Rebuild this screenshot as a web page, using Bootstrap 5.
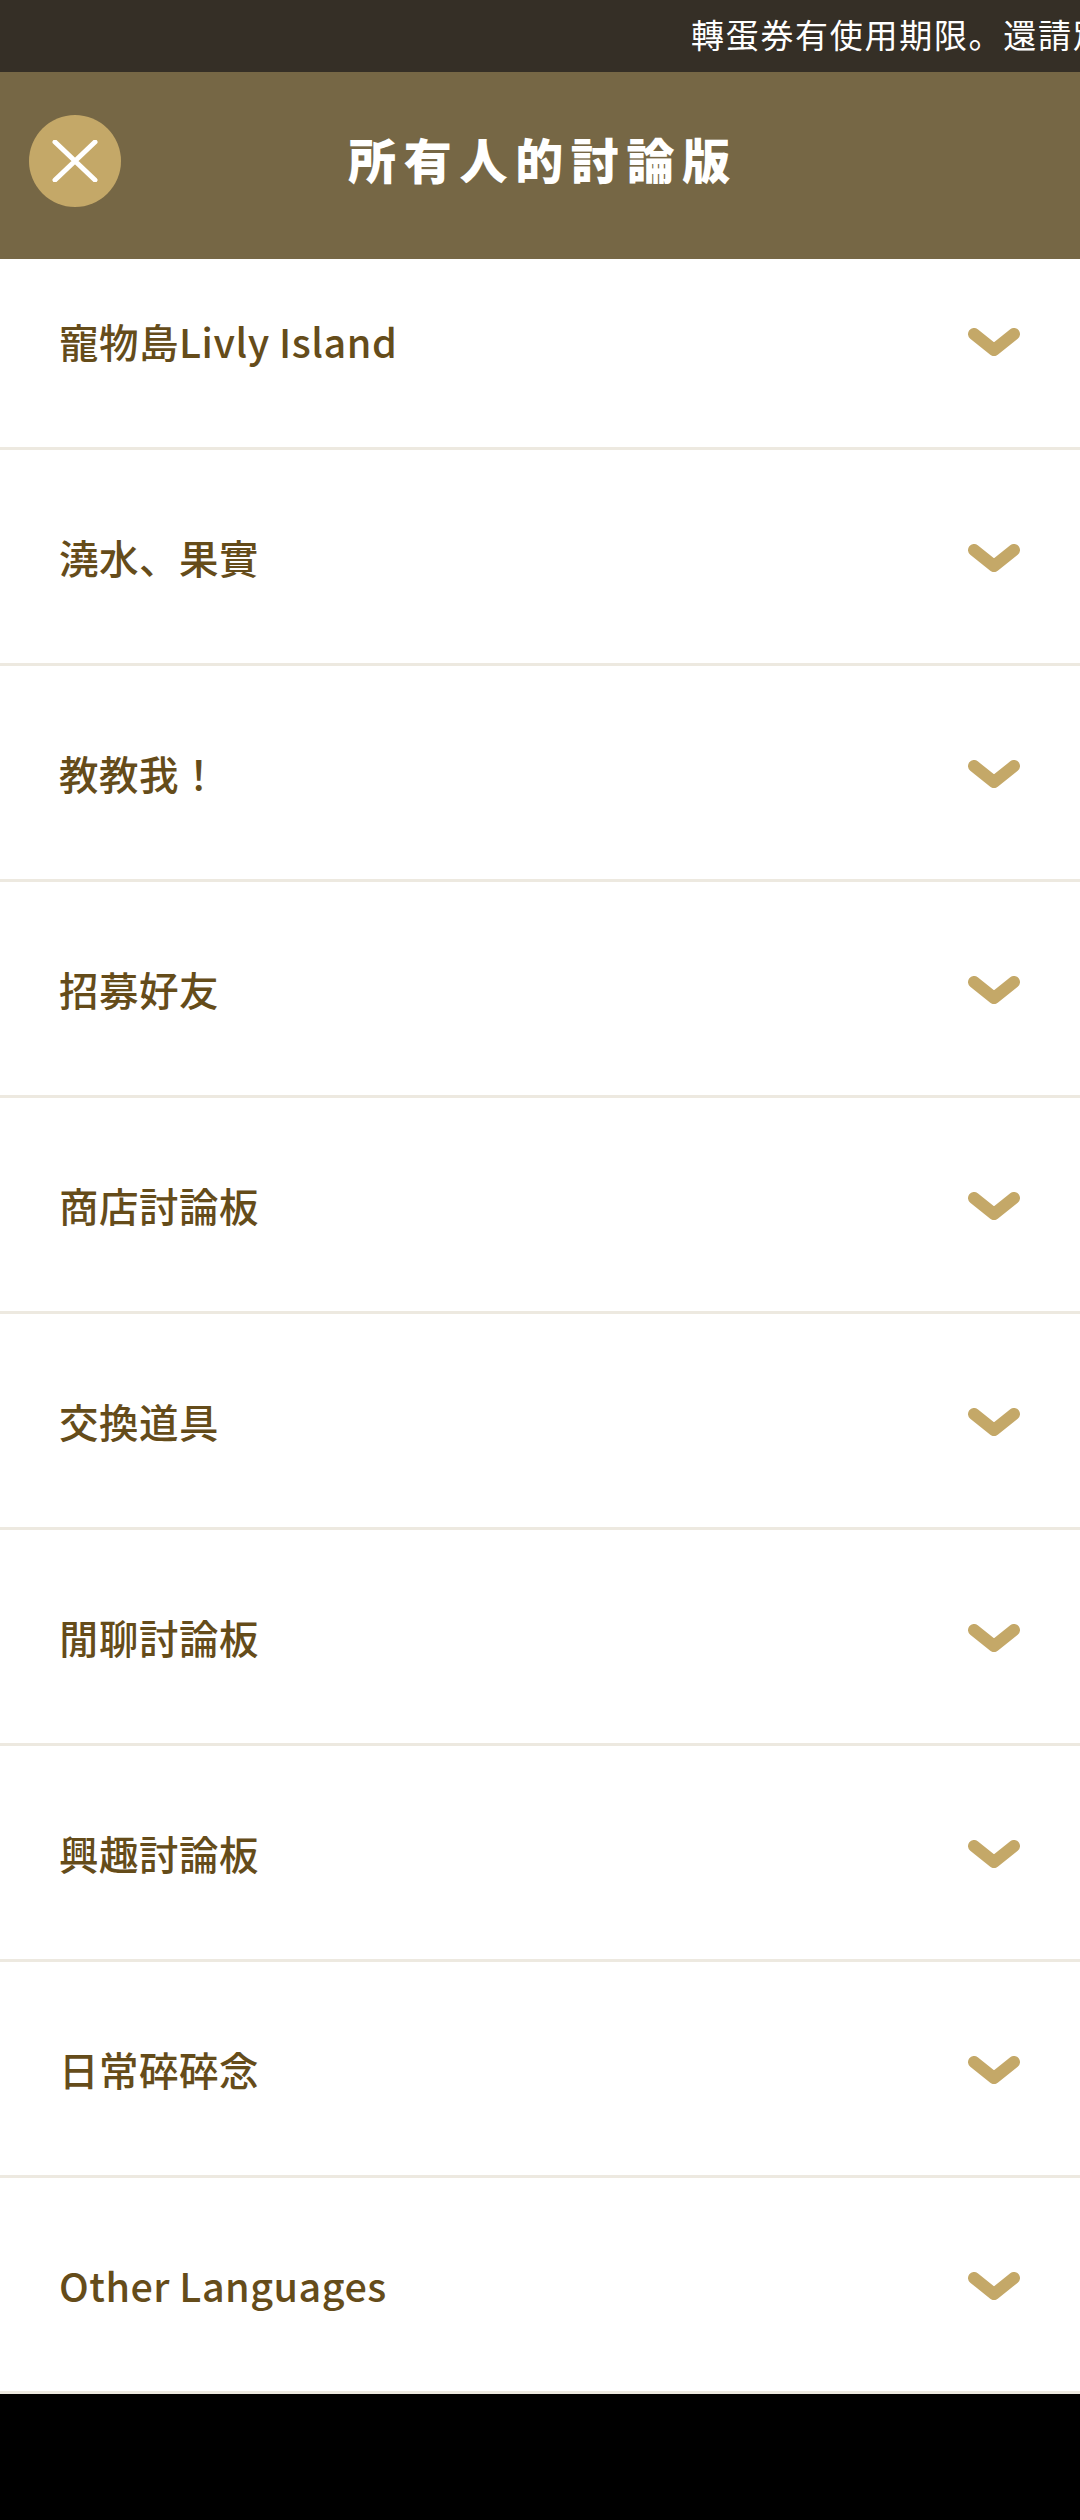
<!DOCTYPE html>
<html lang="ja">
<head>
  <meta charset="UTF-8" />
  <title>所有人的討論版</title>
  <link rel="stylesheet" href="https://cdn.jsdelivr.net/npm/bootstrap@5.3.0/dist/css/bootstrap.min.css" />
  <style>
    * {
      font-family: "Noto Sans CJK JP", "Noto Sans", sans-serif;
    }
    body {
      background-color: #000;
      margin: 0;
    }
    .ticker-bar {
      height: 72px;
      background-color: #352f26;
      color: #fff;
      font-size: 33px;
      letter-spacing: 1.7px;
      line-height: 68px;
      padding-left: 691px;
      white-space: nowrap;
      overflow: hidden;
    }
    .board-head {
      height: 187px;
      padding-bottom: 16px;
      background-color: #766745;
    }
    .board-title {
      margin: 0 0 0 6px;
      color: #fff;
      font-size: 48px;
      font-weight: 900;
      letter-spacing: 7.7px;
      line-height: 1;
    }
    .close-btn {
      left: 29px;
      top: 43px;
      width: 92px;
      height: 92px;
      background-color: #c4a868;
      border: 0;
      padding: 0;
    }
    .board-row {
      height: 216px;
      padding: 0 60px 0 59px;
      background-color: #fff;
      border-bottom: 3px solid #ede9e0;
      color: #654c1a;
      font-size: 39.5px;
      font-weight: 500;
      letter-spacing: 0.5px;
    }
    .board-row:first-child {
      height: 191px;
      padding-bottom: 25px;
    }
    .row-arrow {
      margin-top: 3px;
    }
  </style>
</head>
<body>

  <!-- Ticker -->
  <div class="ticker-bar">轉蛋券有使用期限。還請別忘記使用。</div>

  <!-- Header -->
  <header class="board-head position-relative d-flex align-items-center justify-content-center">
    <button class="close-btn position-absolute rounded-circle d-flex align-items-center justify-content-center" type="button">
      <svg width="46" height="42" viewBox="0 0 46 42"><path d="M3 2L43 40M43 2L3 40" stroke="#fff" stroke-width="5" stroke-linecap="round" fill="none"/></svg>
    </button>
    <h1 class="board-title">所有人的討論版</h1>
  </header>

  <!-- Board list -->
  <div id="boardList"></div>

  <script>
    const boards = ["寵物島Livly Island", "澆水、果實", "教教我！", "招募好友", "商店討論板", "交換道具", "閒聊討論板", "興趣討論板", "日常碎碎念", "Other Languages"];
    const list = document.getElementById("boardList");
    boards.forEach(name => {
      list.insertAdjacentHTML("beforeend", `
        <div class="board-row d-flex align-items-center justify-content-between">
          <span>${name}</span>
          <svg class="row-arrow" width="52" height="28" viewBox="0 0 52 28"><path d="M6 6L26 22L46 6" stroke="#c4a868" stroke-width="12" stroke-linecap="round" stroke-linejoin="round" fill="none"/></svg>
        </div>`);
    });
  </script>
  <script src="https://cdn.jsdelivr.net/npm/bootstrap@5.3.0/dist/js/bootstrap.bundle.min.js"></script>
</body>
</html>
